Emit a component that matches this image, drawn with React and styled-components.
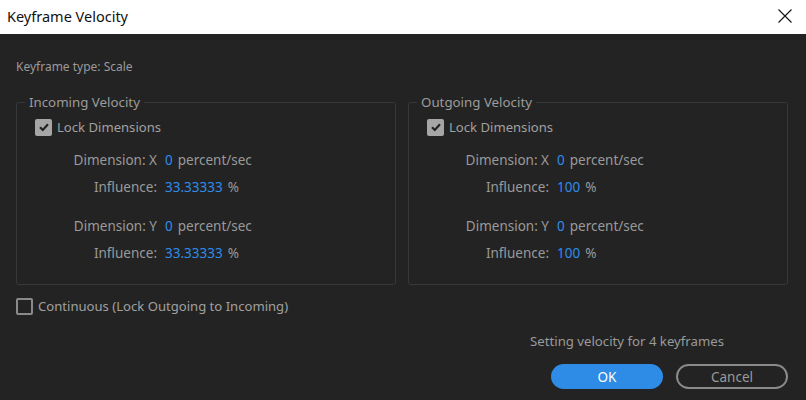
import styled, { createGlobalStyle } from "styled-components";

const GlobalStyle = createGlobalStyle`
  html, body {
    margin: 0;
    padding: 0;
    background: #232323;
  }
  * { box-sizing: border-box; }
`;

const FONT = `"Noto Sans", "Open Sans", sans-serif`;

const Dialog = styled.div`
  width: 806px;
  height: 400px;
  display: flex;
  flex-direction: column;
  background: #232323;
  font-family: ${FONT};
  overflow: hidden;
`;

const TitleBar = styled.div`
  height: 34px;
  background: #ffffff;
  display: flex;
  align-items: center;
  justify-content: space-between;
  padding: 0 12px 0 7px;
  flex-shrink: 0;
`;

const Title = styled.span`
  font-size: 14.5px;
  color: #111;
  margin-top: -2px;
`;

const CloseBtn = styled.button`
  border: none;
  background: transparent;
  padding: 0;
  width: 18px;
  height: 18px;
  display: flex;
  align-items: center;
  justify-content: center;
  margin-top: -3px;
`;

const Body = styled.div`
  flex: 1;
  display: flex;
  flex-direction: column;
  padding: 25px 18px 0 16px;
`;

const TypeLabel = styled.div`
  font-size: 12px;
  color: #9a9a9a;
  line-height: 16px;
`;

const Groups = styled.div`
  display: grid;
  grid-template-columns: 380px 380px;
  column-gap: 12px;
  margin-top: 18px;
`;

const Group = styled.fieldset`
  margin: 0;
  padding: 0 0 12px 0;
  height: 192px;
  border: 1px solid #383838;
  border-radius: 3px;
  min-width: 0;
`;

const Legend = styled.legend`
  font-size: 13.3px;
  color: #9c9c9c;
  padding: 0 4px;
  margin-left: 8px;
  line-height: 18px;
`;

const CheckRow = styled.label`
  display: flex;
  align-items: center;
  gap: 5px;
  font-size: 13.1px;
  color: #a0a0a0;
  margin-left: ${(p) => p.$indent || 0}px;
  margin-top: ${(p) => p.$top || 0}px;
  line-height: 18px;
`;

const Box = styled.span`
  width: 17px;
  height: 17px;
  border-radius: 2px;
  display: inline-flex;
  align-items: center;
  justify-content: center;
  background: ${(p) => (p.$checked ? "#a6a6a6" : "transparent")};
  border: ${(p) => (p.$checked ? "none" : "2px solid #8a8a8a")};
  flex-shrink: 0;
`;

const Rows = styled.div`
  display: flex;
  flex-direction: column;
  margin-top: 15px;
`;

const Pair = styled.div`
  display: flex;
  flex-direction: column;
  gap: 9px;
  & + & {
    margin-top: 21px;
  }
`;

const Row = styled.div`
  display: flex;
  align-items: center;
  height: 18px;
  font-size: 13.5px;
`;

const RowLabel = styled.span`
  width: 140px;
  text-align: right;
  color: #9a9a9a;
`;

const Value = styled.span`
  margin-left: 8px;
  color: #2d8ceb;
`;

const Unit = styled.span`
  margin-left: 5px;
  color: #9a9a9a;
`;

const Footer = styled.div`
  display: flex;
  flex-direction: column;
  align-items: flex-end;
  margin-top: 17px;
`;

const Status = styled.div`
  font-size: 13.2px;
  color: #9a9a9a;
  margin-right: 64px;
  line-height: 18px;
`;

const Buttons = styled.div`
  display: flex;
  gap: 13px;
  margin-top: 14px;
`;

const Button = styled.button`
  width: 112px;
  height: 25px;
  border-radius: 13px;
  font-family: ${FONT};
  font-size: 13.5px;
  padding: 0;
  background: ${(p) => (p.$primary ? "#2e8be6" : "transparent")};
  color: ${(p) => (p.$primary ? "#ffffff" : "#9a9a9a")};
  border: ${(p) => (p.$primary ? "none" : "2px solid #8a8a8a")};
`;

const CheckIcon = () => (
  <svg width="12" height="12" viewBox="0 0 12 12">
    <path d="M2 6.2 L4.8 9 L10 3.2" fill="none" stroke="#232323" strokeWidth="2.2" />
  </svg>
);

const Checkbox = ({ checked, label, indent, top }) => (
  <CheckRow $indent={indent} $top={top}>
    <Box $checked={checked}>{checked && <CheckIcon />}</Box>
    {label}
  </CheckRow>
);

const VelocityGroup = ({ title, influence }) => (
  <Group>
    <Legend>{title}</Legend>
    <Checkbox checked label="Lock Dimensions" indent={18} top={7} />
    <Rows>
      {["X", "Y"].map((axis) => (
        <Pair key={axis}>
          <Row>
            <RowLabel>Dimension: {axis}</RowLabel>
            <Value>0</Value>
            <Unit>percent/sec</Unit>
          </Row>
          <Row>
            <RowLabel>Influence:</RowLabel>
            <Value>{influence}</Value>
            <Unit>%</Unit>
          </Row>
        </Pair>
      ))}
    </Rows>
  </Group>
);

export default function App() {
  return (
    <>
      <GlobalStyle />
      <Dialog>
        <TitleBar>
          <Title>Keyframe Velocity</Title>
          <CloseBtn>
            <svg width="14" height="14" viewBox="0 0 14 14">
              <path d="M0.5 0.5 L13.5 13.5 M13.5 0.5 L0.5 13.5" stroke="#111" strokeWidth="1.1" />
            </svg>
          </CloseBtn>
        </TitleBar>
        <Body>
          <TypeLabel>Keyframe type: Scale</TypeLabel>
          <Groups>
            <VelocityGroup title="Incoming Velocity" influence="33.33333" />
            <VelocityGroup title="Outgoing Velocity" influence="100" />
          </Groups>
          <Checkbox label="Continuous (Lock Outgoing to Incoming)" top={12} />
          <Footer>
            <Status>Setting velocity for 4 keyframes</Status>
            <Buttons>
              <Button $primary>OK</Button>
              <Button>Cancel</Button>
            </Buttons>
          </Footer>
        </Body>
      </Dialog>
    </>
  );
}
